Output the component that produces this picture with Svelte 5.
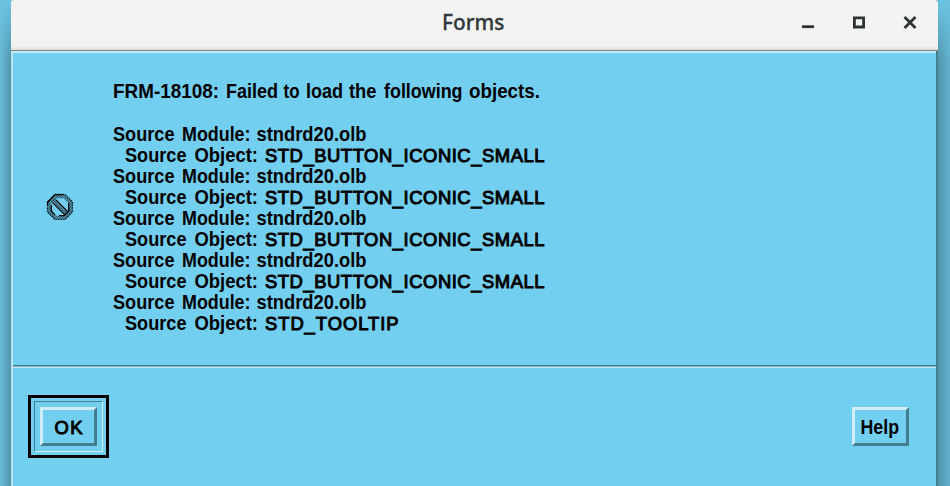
<script>
  const head = [
    { t: 'FRM-18108:', x: 113, e: 219 },
    { t: 'Failed', x: 226, e: 278 },
    { t: 'to', x: 283.5, e: 299.5 },
    { t: 'load', x: 306, e: 343 },
    { t: 'the', x: 349, e: 376.5 },
    { t: 'following', x: 384, e: 462.5 },
    { t: 'objects.', x: 469, e: 540 }
  ];
  const moduleLine = [
    { t: 'Source', x: 113, e: 174.5 },
    { t: 'Module:', x: 182, e: 250.5 },
    { t: 'stndrd20.olb', x: 256.5, e: 366.5 }
  ];
  const objectLine = (name, end) => [
    { t: 'Source', x: 125, e: 186.5 },
    { t: 'Object:', x: 194.5, e: 258 },
    { t: name, x: 265, e: end, caps: true }
  ];
  const button = objectLine('STD_BUTTON_ICONIC_SMALL', 544.5);
  const lines = [
    head, [],
    moduleLine, button, moduleLine, button,
    moduleLine, button, moduleLine, button,
    moduleLine, objectLine('STD_TOOLTIP', 398.5)
  ];
</script>

<div class="desktop">
  <div class="window">
    <header>
      <svg class="title" width="80" height="40"><text x="6" y="29.8" textLength="62.5" lengthAdjust="spacingAndGlyphs">Forms</text></svg>
      <div class="controls">
        <svg width="14" height="14"><path d="M1 11.7H13" stroke="#2e3436" stroke-width="2.8" /></svg>
        <svg width="14" height="14"><path d="M2.4 2.8H11.6V12H2.4Z" fill="none" stroke="#2e3436" stroke-width="2.8" /></svg>
        <svg width="14" height="14"><path d="M2.5 3L11.5 12M11.5 3L2.5 12" stroke="#2e3436" stroke-width="2.8" stroke-linecap="square" /></svg>
      </div>
    </header>
    <main>
      <div class="icon">
        <svg width="28" height="28" viewBox="0 0 28 28">
          <defs>
            <pattern id="dither" width="2.66" height="2.66" patternUnits="userSpaceOnUse">
              <rect width="1.33" height="1.33" fill="#10222a" />
              <rect x="1.33" y="1.33" width="1.33" height="1.33" fill="#10222a" />
            </pattern>
          </defs>
          <g fill="none">
            <path d="M9.6 3.2H18.4L24.8 9.6V18.4L18.4 24.8H9.6L3.2 18.4V9.6Z" stroke="url(#dither)" stroke-width="4" />
            <path d="M7 7L21 21" stroke="url(#dither)" stroke-width="3" />
            <path d="M9 1.4H19L26.5 9V19L19 26.5H9L1.4 19V9Z" stroke="#0a171c" stroke-width="1.2" stroke-dasharray="1.4 1.2" />
            <path d="M1.6 12V9L9 1.6H17M22.7 10V18L18 22.7H13M5.3 12V18L9 22" stroke="#000" stroke-width="1.3" />
            <path d="M9.5 6.5L21.5 18.5M6.5 9.5L18.5 21.5" stroke="#000" stroke-width="1.1" />
          </g>
        </svg>
      </div>
      <div class="message">
        {#each lines as line}
          <svg class="line" width="460" height="21.1">
            {#each line as w}
              <text class:caps={w.caps} x={w.x - 100} y="17" textLength={w.e - w.x} lengthAdjust={w.caps ? 'spacing' : 'spacingAndGlyphs'}>{w.t}</text>
            {/each}
          </svg>
        {/each}
      </div>
    </main>
    <footer>
      <div class="default"><div class="groove">
        <button><svg width="30" height="22"><text class="caps" x="0.5" y="17.5" textLength="28" lengthAdjust="spacing">OK</text></svg></button>
      </div></div>
      <button class="help"><svg width="40" height="22"><text x="0.5" y="17.5" textLength="38.5" lengthAdjust="spacingAndGlyphs">Help</text></svg></button>
    </footer>
  </div>
</div>

<style>
  :global(body) { margin: 0; overflow: hidden; }
  * { box-sizing: border-box; }
  svg { display: block; overflow: visible; flex: none; }
  .desktop {
    height: 486px;
    padding: 0 12px 0 11px;
    overflow: hidden;
    background: linear-gradient(90deg, #68bbd8 0, #5294ab 11px, #5294ab 938px, #62b2cd 950px);
    position: relative;
  }
  .desktop::before {
    content: '';
    position: absolute;
    inset: 0;
    background: linear-gradient(#6bc3e2, rgba(107, 195, 226, 0) 60px);
  }
  .window {
    position: relative;
    height: 486px;
    display: flex;
    flex-direction: column;
    background: #72cff0;
    border-left: 2px solid #b9e4f3;
    border-right: 2px solid #447c90;
    border-radius: 3px 3px 0 0;
  }
  header {
    height: 51px;
    margin: 0 -2px;
    display: flex;
    justify-content: space-between;
    background: linear-gradient(#f3f3f3 46px, #dedede 49.5px, #85857f 50px, #85857f 51px);
    border-radius: 3px 3px 0 0;
    flex: none;
  }
  .title { margin-left: 425px; }
  .title text { font: 500 22px "Noto Sans", "Open Sans", sans-serif; fill: #30383a; stroke: #30383a; stroke-width: 0.3px; }
  .controls { display: flex; gap: 37px; padding: 15px 21px 0 0; }
  main {
    height: 315.5px;
    flex: none;
    display: flex;
    border-top: 2px solid #c2e8f5;
  }
  .icon { width: 87px; padding: 140px 0 0 33px; }
  .message { padding-top: 28.4px; }
  .line { height: 21.1px; }
  .line text, button text { font: bold 19.7px "Liberation Sans", Arial, sans-serif; fill: #000; }
  .line text.caps, button text.caps { font-size: 18.4px; font-weight: 400; stroke: #000; stroke-width: 1px; }
  footer {
    flex: 1;
    margin-top: -1.5px;
    display: flex;
    justify-content: space-between;
    padding: 28px 27.5px 0 15px;
    background: linear-gradient(#447c90 0, #447c90 1.4px, #c2e8f5 1.6px, #c2e8f5 2.7px, transparent 3px);
  }
  .default { margin-top: 2px; width: 81px; height: 63px; border: 3px solid #000; padding: 3px; }
  .groove {
    width: 69px;
    height: 51px;
    border: 1px solid;
    border-color: #447c90 #d0eef9 #d0eef9 #447c90;
    padding: 5px;
  }
  button {
    width: 57px;
    height: 39px;
    display: flex;
    align-items: center;
    justify-content: center;
    padding: 0;
    background: #72cff0;
    border: 3px solid;
    border-color: #d0eef9 #447c90 #447c90 #d0eef9;
  }
  .help { margin-top: 14px; }
</style>
